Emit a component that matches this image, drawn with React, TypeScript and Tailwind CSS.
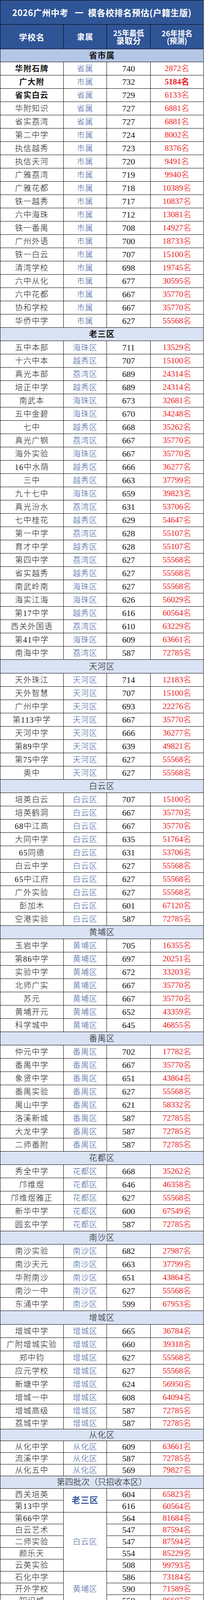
import React from 'react';

type R = { n: string; d: string; s: string; k: string; bn?: boolean; bk?: boolean; h?: number };
type Sec = { t: string; bold?: boolean; bg: string; sh?: number; rows: R[] };

const H: Record<number, string> = {
  30: 'h-[30px]',
  31: 'h-[31px]',
  32: 'h-[32px]',
  33: 'h-[33px]',
  34: 'h-[34px]',
  35: 'h-[35px]',
};

const mk = (d: string, list: [string, string, string][]): R[] =>
  list.map(([n, s, k]) => ({ n, d, s, k }));

const sections: Sec[] = [
  {
    t: '省市属',
    bold: true,
    bg: 'bg-[#B4C7E7]',
    sh: 33,
    rows: [
      { n: '华附石牌', d: '省属', s: '740', k: '2872', bn: true },
      { n: '广大附', d: '市属', s: '732', k: '5184', bn: true, bk: true },
      { n: '省实白云', d: '省属', s: '729', k: '6133', bn: true },
      { n: '华附知识', d: '省属', s: '727', k: '6881' },
      { n: '省实荔湾', d: '省属', s: '727', k: '6881' },
      { n: '第二中学', d: '市属', s: '724', k: '8002' },
      { n: '执信越秀', d: '市属', s: '723', k: '8376' },
      { n: '执信天河', d: '市属', s: '720', k: '9491' },
      { n: '广雅荔湾', d: '市属', s: '719', k: '9940' },
      { n: '广雅花都', d: '市属', s: '718', k: '10389' },
      { n: '铁一越秀', d: '市属', s: '717', k: '10837' },
      { n: '六中海珠', d: '市属', s: '712', k: '13081' },
      { n: '铁一番禺', d: '市属', s: '708', k: '14927' },
      { n: '广州外语', d: '市属', s: '700', k: '18733' },
      { n: '铁一白云', d: '市属', s: '707', k: '15100' },
      { n: '清湾学校', d: '市属', s: '698', k: '19745' },
      { n: '六中从化', d: '市属', s: '677', k: '30595' },
      { n: '六中花都', d: '市属', s: '667', k: '35770' },
      { n: '协和学校', d: '市属', s: '667', k: '35770' },
      { n: '华侨中学', d: '市属', s: '627', k: '55568' },
    ],
  },
  {
    t: '老三区',
    bold: true,
    bg: 'bg-[#DAE3F3]',
    rows: [
      { n: '五中本部', d: '海珠区', s: '711', k: '13529' },
      { n: '十六中本', d: '越秀区', s: '707', k: '15100' },
      { n: '真光本部', d: '荔湾区', s: '689', k: '24314' },
      { n: '培正中学', d: '越秀区', s: '689', k: '24314' },
      { n: '南武本', d: '海珠区', s: '673', k: '32681' },
      { n: '五中金碧', d: '海珠区', s: '670', k: '34248' },
      { n: '七中', d: '越秀区', s: '668', k: '35262' },
      { n: '真光广钢', d: '荔湾区', s: '667', k: '35770' },
      { n: '海外实验', d: '海珠区', s: '667', k: '35770' },
      { n: '16中水荫', d: '越秀区', s: '666', k: '36277' },
      { n: '三中', d: '越秀区', s: '663', k: '37799' },
      { n: '九十七中', d: '海珠区', s: '659', k: '39823' },
      { n: '真光汾水', d: '荔湾区', s: '631', k: '53706' },
      { n: '七中桂花', d: '越秀区', s: '629', k: '54647' },
      { n: '第一中学', d: '荔湾区', s: '628', k: '55107' },
      { n: '育才中学', d: '越秀区', s: '628', k: '55107' },
      { n: '第四中学', d: '荔湾区', s: '627', k: '55568' },
      { n: '省实越秀', d: '越秀区', s: '627', k: '55568' },
      { n: '南武岭南', d: '海珠区', s: '627', k: '55568' },
      { n: '海实江海', d: '海珠区', s: '626', k: '56029' },
      { n: '第17中学', d: '越秀区', s: '616', k: '60564' },
      { n: '西关外国语', d: '荔湾区', s: '610', k: '63229' },
      { n: '第41中学', d: '海珠区', s: '609', k: '63661' },
      { n: '南海中学', d: '荔湾区', s: '587', k: '72785' },
    ],
  },
  {
    t: '天河区',
    bg: 'bg-[#DAE3F3]',
    sh: 35,
    rows: mk('天河区', [
      ['天外珠江', '714', '12183'],
      ['天外智慧', '707', '15100'],
      ['广州中学', '693', '22276'],
      ['第113中学', '667', '35770'],
      ['天河中学', '666', '36277'],
      ['第89中学', '639', '49821'],
      ['第75中学', '627', '55568'],
      ['奥中', '627', '55568'],
    ]),
  },
  {
    t: '白云区',
    bg: 'bg-[#DAE3F3]',
    rows: mk('白云区', [
      ['培英白云', '707', '15100'],
      ['培英鹤洞', '667', '35770'],
      ['68中江高', '667', '35770'],
      ['大同中学', '635', '51764'],
      ['65同德', '631', '53706'],
      ['白云中学', '627', '55568'],
      ['65中江府', '627', '55568'],
      ['广外实验', '627', '55568'],
      ['彭加木', '601', '67120'],
      ['空港实验', '587', '72785'],
    ]),
  },
  {
    t: '黄埔区',
    bg: 'bg-[#DAE3F3]',
    rows: mk('黄埔区', [
      ['玉岩中学', '705', '16355'],
      ['第86中学', '697', '20251'],
      ['实验中学', '672', '33203'],
      ['北师广实', '667', '35770'],
      ['苏元', '667', '35770'],
      ['黄埔开元', '652', '43359'],
      ['科学城中', '645', '46855'],
    ]),
  },
  {
    t: '番禺区',
    bg: 'bg-[#DAE3F3]',
    rows: mk('番禺区', [
      ['仲元中学', '702', '17782'],
      ['番禺中学', '667', '35770'],
      ['象贤中学', '651', '43864'],
      ['番禺实验', '627', '55568'],
      ['禺山中学', '621', '58332'],
      ['洛溪新城', '587', '72785'],
      ['大龙中学', '587', '72785'],
      ['二师番附', '587', '72785'],
    ]),
  },
  {
    t: '花都区',
    bg: 'bg-[#DAE3F3]',
    rows: mk('花都区', [
      ['秀全中学', '668', '35262'],
      ['邝维煜', '646', '46358'],
      ['邝维煜雅正', '627', '55568'],
      ['新华中学', '600', '67549'],
      ['圆玄中学', '587', '72785'],
    ]),
  },
  {
    t: '南沙区',
    bg: 'bg-[#DAE3F3]',
    rows: mk('南沙区', [
      ['南沙实验', '682', '27987'],
      ['南沙天元', '663', '37799'],
      ['华附南沙', '651', '43864'],
      ['南沙一中', '627', '55568'],
      ['东涌中学', '599', '67953'],
    ]),
  },
  {
    t: '增城区',
    bg: 'bg-[#DAE3F3]',
    sh: 35,
    rows: [
      ...mk('增城区', [
        ['增城中学', '665', '36784'],
        ['广附增城实验', '660', '39318'],
        ['郑中钧', '627', '55568'],
        ['应元学校', '627', '55568'],
        ['新塘中学', '624', '56950'],
        ['增城一中', '608', '64094'],
        ['增城高级', '587', '72785'],
      ]),
      { n: '荔城中学', d: '增城区', s: '587', k: '72785', h: 30 },
    ],
  },
  {
    t: '从化区',
    bg: 'bg-[#DAE3F3]',
    sh: 30,
    rows: mk('从化区', [
      ['从化中学', '609', '63661'],
      ['流溪中学', '587', '72785'],
      ['从化五中', '569', '79827'],
    ]).map((r) => ({ ...r, h: 30 })),
  },
];

type FR = { n: string; s: string; k: string; h?: number; flag?: boolean; bs?: boolean };
type FG = { d: string; bold?: boolean; rows: FR[] };

const fourth: FG[] = [
  {
    d: '老三区',
    bold: true,
    rows: [
      { n: '西关培英', s: '604', k: '65823' },
      { n: '第13中学', s: '616', k: '60564', h: 31 },
    ],
  },
  {
    d: '白云区',
    rows: [
      { n: '第66中学', s: '564', k: '81684' },
      { n: '白云艺术', s: '547', k: '87594' },
      { n: '二师实验', s: '547', k: '87594' },
      { n: '颜乐天', s: '554', k: '85229' },
      { n: '云英实验', s: '508', k: '99793', h: 31 },
    ],
  },
  {
    d: '黄埔区',
    rows: [
      { n: '石化中学', s: '586', k: '73184' },
      { n: '开外学校', s: '590', k: '71589' },
      { n: '知识城', s: '550', k: '86607' },
    ],
  },
  {
    d: '番禺区',
    rows: [
      { n: '石碁中学', s: '538', k: '90557' },
      { n: '石北中学', s: '527', k: '94095' },
      { n: '石楼中学', s: '520', k: '96243' },
      { n: '南村中学', s: '535', k: '91538' },
    ],
  },
  {
    d: '花都区',
    rows: [
      { n: '花都一中', s: '578', k: '76348' },
      { n: '花都二中', s: '547', k: '87594', h: 31 },
    ],
  },
  {
    d: '南沙区',
    rows: [
      { n: '鱼窝头', s: '548', k: '87265' },
      { n: '大岗中学', s: '565', k: '81313' },
      { n: '麒麟中学', s: '561', k: '82799' },
    ],
  },
  {
    d: '增城区',
    rows: [
      { n: '派潭中学', s: '547', k: '87594' },
      { n: '中新中学', s: '547', k: '87594', h: 31, flag: true },
      { n: '仙村中学', s: '581', k: '75177', flag: true },
      { n: '永和中学', s: '547', k: '87594' },
    ],
  },
  {
    d: '从化区',
    rows: [
      { n: '从化二中', s: '520', k: '96243' },
      { n: '从化三中', s: '487', k: '105521' },
      { n: '从化四中', s: '487', k: '105521', bs: true },
    ],
  },
];

const cellBase = 'shrink-0 flex items-center justify-center border-r border-b border-black overflow-hidden leading-none';
const NAME = 'text-[20px] tracking-[1.5px] text-[#141414]';
const DIST = 'text-[20px] tracking-[1px] text-[#44619f]';
const SCORE = 'text-[22px] text-[#161616]';
const RANK = 'text-[21px] text-[#ee1d25]';

function Row({ r }: { r: R }) {
  const h = H[r.h ?? 34];
  return (
    <div className={`flex overflow-hidden ${h}`}>
      <div className={`w-[162px] ${cellBase} ${NAME} ${r.bn ? 'font-bold' : 'font-light'}`}>{r.n}</div>
      <div className={`w-[111px] ${cellBase} ${DIST} font-light`}>{r.d}</div>
      <div className={`w-[112px] ${cellBase} ${SCORE}`}>{r.s}</div>
      <div className={`w-[136px] ${cellBase} ${RANK} ${r.bk ? 'font-bold' : 'font-light'}`}>{r.k}名</div>
    </div>
  );
}

function SectionTitle({ s }: { s: Sec }) {
  return (
    <div
      className={`${H[s.sh ?? 34]} ${s.bg} flex items-center justify-center overflow-hidden leading-none border-r border-b border-black text-[21px] tracking-[1px] text-[#111] ${
        s.bold ? 'font-bold' : 'font-light'
      }`}
    >
      {s.t}
    </div>
  );
}

function FourthGroup({ g }: { g: FG }) {
  return (
    <div className="flex">
      <div className="flex flex-col w-[162px] shrink-0">
        {g.rows.map((r, i) => (
          <div key={i} className={`${H[r.h ?? 30]} w-[162px] relative ${cellBase} ${NAME} font-light`}>
            {r.flag && (
              <span className="absolute left-0 top-0 w-0 h-0 border-t-[5px] border-r-[5px] border-t-[#1f8a2e] border-r-transparent" />
            )}
            {r.n}
          </div>
        ))}
      </div>
      <div
        className={`w-[111px] ${cellBase} ${
          g.bold
            ? 'text-[22px] tracking-[1px] font-bold text-[#3d5a9c]'
            : 'text-[20px] tracking-[1px] font-light text-[#44619f]'
        }`}
      >
        {g.d}
      </div>
      <div className="flex flex-col w-[112px] shrink-0">
        {g.rows.map((r, i) => (
          <div key={i} className={`${H[r.h ?? 30]} w-[112px] ${cellBase} ${SCORE} ${r.bs ? 'font-bold' : ''}`}>
            {r.s}
          </div>
        ))}
      </div>
      <div className="flex flex-col w-[136px] shrink-0">
        {g.rows.map((r, i) => (
          <div key={i} className={`${H[r.h ?? 30]} w-[136px] ${cellBase} ${RANK} font-light`}>
            {r.k}名
          </div>
        ))}
      </div>
    </div>
  );
}

export default function App() {
  return (
    <div className="w-[533px] bg-white font-['Liberation_Serif','Noto_Sans_CJK_SC',serif]">
      <div className="w-[522px] border-l border-t border-black">
        <div className="h-[62px] bg-[#2F5597] border-r border-b border-black flex items-center justify-center text-white text-[22px] font-bold tracking-[0.5px] whitespace-pre font-['Noto_Sans_CJK_SC',sans-serif]">
          {'2026广州中考\u2002\u2009一\u2002模各校排名预估(户籍生版)'}
        </div>
        <div className="flex h-[63px] bg-[#2F5597] text-white font-bold font-['Noto_Sans_CJK_SC',sans-serif]">
          <div className={`w-[162px] ${cellBase} text-[21px] tracking-[1px]`}>学校名</div>
          <div className={`w-[111px] ${cellBase} text-[20px] tracking-[1px]`}>隶属</div>
          <div className={`w-[112px] ${cellBase} flex-col text-[19px] leading-[27px]`}>
            <span>25年最低</span>
            <span className="text-[21px]">录取分</span>
          </div>
          <div className={`w-[136px] ${cellBase} flex-col text-[19px] leading-[27px]`}>
            <span>26年排名</span>
            <span>(预测)</span>
          </div>
        </div>
        {sections.map((s, i) => (
          <div key={i}>
            <SectionTitle s={s} />
            {s.rows.map((r, j) => (
              <Row key={j} r={r} />
            ))}
          </div>
        ))}
        <div className="h-[32px] bg-[#DAE3F3] flex items-center justify-center border-r border-b border-black text-[21px] font-light text-[#111]">
          第四批次（只招收本区）
        </div>
        {fourth.map((g, i) => (
          <FourthGroup key={i} g={g} />
        ))}
      </div>
    </div>
  );
}
